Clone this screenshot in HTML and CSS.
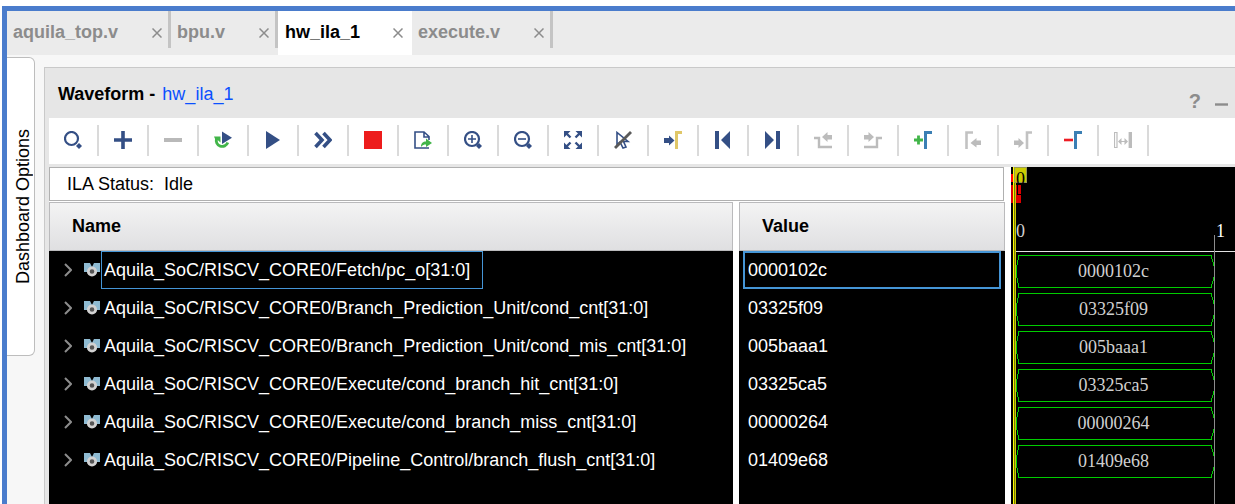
FILE: index.html
```html
<!DOCTYPE html>
<html lang="en">
<head>
<meta charset="utf-8">
<title>hw_ila_1</title>
<link rel="stylesheet" href="styles.css">
</head>
<body>
<div class="window">
  <nav class="tabs" aria-label="Editors">
    <div class="tab tab-first"><button class="tab-name">aquila_top.v</button><button class="tab-close" aria-label="Close aquila_top.v"><svg viewBox="0 0 10 10"><path d="M.5.5l9 9M9.500.5l-9 9"/></svg></button></div>
    <div class="tab tab-short"><button class="tab-name">bpu.v</button><button class="tab-close" aria-label="Close bpu.v"><svg viewBox="0 0 10 10"><path d="M.5.5l9 9M9.500.5l-9 9"/></svg></button></div>
    <div class="tab tab-active"><button class="tab-name">hw_ila_1</button><button class="tab-close" aria-label="Close hw_ila_1"><svg viewBox="0 0 10 10"><path d="M.5.5l9 9M9.500.5l-9 9"/></svg></button></div>
    <div class="tab tab-last"><button class="tab-name">execute.v</button><button class="tab-close" aria-label="Close execute.v"><svg viewBox="0 0 10 10"><path d="M.5.5l9 9M9.500.5l-9 9"/></svg></button></div>
  </nav>
  <div class="workspace">
    <button class="side-tab"><span>Dashboard Options</span></button>
    <section class="panel">
      <header class="panel-head">
        <h1>Waveform - <a href="#">hw_ila_1</a></h1>
        <button class="help" aria-label="Help">?</button>
        <button class="minimize" aria-label="Minimize"><svg viewBox="0 0 13 3"><path d="M0 1.500h13" stroke="#8c8c8c" stroke-width="2.400"/></svg></button>
      </header>
      <div class="toolbar">
        <button aria-label="Search"><svg viewBox="0 0 18 18" fill="none" stroke="#344f85"><circle cx="7.500" cy="7.500" r="6.500" stroke-width="2.200"/><path d="M13.500 13.500l3 3" stroke-width="4.200"/></svg></button>
        <button aria-label="Add"><svg viewBox="0 0 18 18"><path d="M9 0v18M0 9h18" stroke="#344f85" stroke-width="3.600"/></svg></button>
        <button aria-label="Remove"><svg viewBox="0 0 18 18"><path d="M0 9h18" stroke="#b9b9b9" stroke-width="4"/></svg></button>
        <button aria-label="Auto re-trigger"><svg viewBox="0 0 18 18"><path d="M2.600 7.500A5.800 5.800 0 1 0 13.800 11.500" fill="none" stroke="#42b549" stroke-width="2.800"/><path d="M0 5.500H6.500V11.500L4.200 9.500 1.500 9z" fill="#42b549"/><path d="M8 .5L18 6.700 8 13z" fill="#344f85"/></svg></button>
        <button aria-label="Run trigger"><svg viewBox="0 0 18 18"><path d="M2 0L16 9 2 18z" fill="#344f85"/></svg></button>
        <button aria-label="Run trigger immediate"><svg viewBox="0 0 18 18"><path d="M1.500 2L8 9l-6.500 7M9.500 2L16 9l-6.500 7" fill="none" stroke="#344f85" stroke-width="3.600"/></svg></button>
        <button aria-label="Stop trigger"><svg viewBox="0 0 18 18"><path d="M0 0h18v18H0z" fill="#ed1c1c"/></svg></button>
        <button aria-label="Export data"><svg viewBox="0 0 18 18"><path d="M15 9V5.500L10 1H1v16h14M10 1v5h5" fill="none" stroke="#344f85" stroke-width="1.600"/><path d="M7 16c0-4 2-5.500 5-5.500V7.500l6 4.500-6 4v-2.500c-2 0-3.500.5-5 2.500z" fill="#42b549"/></svg></button>
        <button aria-label="Zoom in"><svg viewBox="0 0 18 18" fill="none" stroke="#344f85"><circle cx="8" cy="8" r="7" stroke-width="2.200"/><path d="M8 4v8M4 8h8" stroke-width="1.600"/><path d="M13.500 13.500l3 3" stroke-width="4.200"/></svg></button>
        <button aria-label="Zoom out"><svg viewBox="0 0 18 18" fill="none" stroke="#344f85"><circle cx="8" cy="8" r="7" stroke-width="2.200"/><path d="M4 8h8" stroke-width="1.600"/><path d="M13.500 13.500l3 3" stroke-width="4.200"/></svg></button>
        <button aria-label="Zoom fit"><svg viewBox="0 0 18 18"><path d="M0 0h6.500L0 6.500zM18 0v6.500L11.500 0zM0 18v-6.500L6.500 18zM18 18h-6.500l6.500-6.500z" fill="#344f85"/><path d="M2 2l4.500 4.500M16 2l-4.500 4.500M2 16l4.500-4.500M16 16l-4.500-4.500" stroke="#344f85" stroke-width="2.400"/></svg></button>
        <button aria-label="Go to cursor"><svg viewBox="0 0 18 18" fill="none"><path d="M3 1.500v12l3-2.500 3 6 3-1-2.500-5.500H14z" stroke="#344f85" stroke-width="1.600"/><path d="M1 17L17 1" stroke="#5a5a5a" stroke-width="2.800"/></svg></button>
        <button aria-label="Go to marker"><svg viewBox="0 0 18 18"><path d="M0 7h5V4.500l5.500 5L5 14.500V12H0z" fill="#344f85"/><path d="M12.500 18V1.500H18" fill="none" stroke="#e0c768" stroke-width="3"/></svg></button>
        <button aria-label="First"><svg viewBox="0 0 18 18"><path d="M1 0h4v18H1zM16 0v18L7 9z" fill="#344f85"/></svg></button>
        <button aria-label="Last"><svg viewBox="0 0 18 18"><path d="M12 0h4v18h-4zM1 0v18l9-9z" fill="#344f85"/></svg></button>
        <button aria-label="Previous transition"><svg viewBox="0 0 18 18"><path d="M0 7h5v9h13" fill="none" stroke="#bcbcbc" stroke-width="2.400"/><path d="M18 4h-4.500V1L8 6l5.500 5V8.500H18z" fill="#bcbcbc"/></svg></button>
        <button aria-label="Next transition"><svg viewBox="0 0 18 18"><path d="M0 16h13V7h5" fill="none" stroke="#bcbcbc" stroke-width="2.400"/><path d="M0 4h4.500V1L10 6l-5.500 5V8.500H0z" fill="#bcbcbc"/></svg></button>
        <button aria-label="Add marker"><svg viewBox="0 0 18 18" fill="none"><path d="M4.500 4.500v9M0 9h9" stroke="#42b549" stroke-width="2.800"/><path d="M11.500 18V1.500H18" stroke="#3b7fb4" stroke-width="3"/></svg></button>
        <button aria-label="Previous marker"><svg viewBox="0 0 18 18"><path d="M2.500 18V1.500H9" fill="none" stroke="#c2c2c2" stroke-width="2.600"/><path d="M17 9.500h-4.500V7L6.500 12l6 4.500V14H17z" fill="#bcbcbc"/></svg></button>
        <button aria-label="Next marker"><svg viewBox="0 0 18 18"><path d="M13 18V1.500h5" fill="none" stroke="#c2c2c2" stroke-width="2.600"/><path d="M0 9.500h4.500V7l5.500 5-5.500 5v-3H0z" fill="#bcbcbc"/></svg></button>
        <button aria-label="Delete marker"><svg viewBox="0 0 18 18" fill="none"><path d="M0 9h9" stroke="#ed1c24" stroke-width="2.600"/><path d="M11.500 18V1.500H18" stroke="#3b7fb4" stroke-width="3"/></svg></button>
        <button aria-label="Swap cursors"><svg viewBox="0 0 18 18" fill="none" stroke="#bcbcbc"><path d="M.5 1.500H3v15H.5zM6 10.500h6" stroke-width="1.200"/><path d="M16.300 1v16" stroke-width="3.400"/><path d="M7.500 7v7L4 10.500zM10.500 7v7l3.500-3.500z" fill="#bcbcbc" stroke="none"/></svg></button>
      </div>
      <div class="content">
        <div class="signals">
          <p class="status">ILA Status:&nbsp; Idle</p>
          <table>
            <thead><tr><th class="name">Name</th><th class="value">Value</th></tr></thead>
            <tbody>
              <tr class="selected"><td class="name"><div class="signal"><button class="expand" aria-label="Expand"><svg viewBox="0 0 8 14"><path d="M1 1l6 6-6 6"/></svg></button><svg class="bus" viewBox="0 0 16 14"><path d="M0 0h6l2 4 2-4h6v9H0z" fill="#8fbbd2"/><circle cx="8" cy="8.500" r="3.700" fill="#555" stroke="#d2d2d2" stroke-width="2.800"/></svg><span class="label">Aquila_SoC/RISCV_CORE0/Fetch/pc_o[31:0]</span></div></td><td class="value"><div>0000102c</div></td></tr>
              <tr><td class="name"><div class="signal"><button class="expand" aria-label="Expand"><svg viewBox="0 0 8 14"><path d="M1 1l6 6-6 6"/></svg></button><svg class="bus" viewBox="0 0 16 14"><path d="M0 0h6l2 4 2-4h6v9H0z" fill="#8fbbd2"/><circle cx="8" cy="8.500" r="3.700" fill="#555" stroke="#d2d2d2" stroke-width="2.800"/></svg><span class="label">Aquila_SoC/RISCV_CORE0/Branch_Prediction_Unit/cond_cnt[31:0]</span></div></td><td class="value"><div>03325f09</div></td></tr>
              <tr><td class="name"><div class="signal"><button class="expand" aria-label="Expand"><svg viewBox="0 0 8 14"><path d="M1 1l6 6-6 6"/></svg></button><svg class="bus" viewBox="0 0 16 14"><path d="M0 0h6l2 4 2-4h6v9H0z" fill="#8fbbd2"/><circle cx="8" cy="8.500" r="3.700" fill="#555" stroke="#d2d2d2" stroke-width="2.800"/></svg><span class="label">Aquila_SoC/RISCV_CORE0/Branch_Prediction_Unit/cond_mis_cnt[31:0]</span></div></td><td class="value"><div>005baaa1</div></td></tr>
              <tr><td class="name"><div class="signal"><button class="expand" aria-label="Expand"><svg viewBox="0 0 8 14"><path d="M1 1l6 6-6 6"/></svg></button><svg class="bus" viewBox="0 0 16 14"><path d="M0 0h6l2 4 2-4h6v9H0z" fill="#8fbbd2"/><circle cx="8" cy="8.500" r="3.700" fill="#555" stroke="#d2d2d2" stroke-width="2.800"/></svg><span class="label">Aquila_SoC/RISCV_CORE0/Execute/cond_branch_hit_cnt[31:0]</span></div></td><td class="value"><div>03325ca5</div></td></tr>
              <tr><td class="name"><div class="signal"><button class="expand" aria-label="Expand"><svg viewBox="0 0 8 14"><path d="M1 1l6 6-6 6"/></svg></button><svg class="bus" viewBox="0 0 16 14"><path d="M0 0h6l2 4 2-4h6v9H0z" fill="#8fbbd2"/><circle cx="8" cy="8.500" r="3.700" fill="#555" stroke="#d2d2d2" stroke-width="2.800"/></svg><span class="label">Aquila_SoC/RISCV_CORE0/Execute/cond_branch_miss_cnt[31:0]</span></div></td><td class="value"><div>00000264</div></td></tr>
              <tr><td class="name"><div class="signal"><button class="expand" aria-label="Expand"><svg viewBox="0 0 8 14"><path d="M1 1l6 6-6 6"/></svg></button><svg class="bus" viewBox="0 0 16 14"><path d="M0 0h6l2 4 2-4h6v9H0z" fill="#8fbbd2"/><circle cx="8" cy="8.500" r="3.700" fill="#555" stroke="#d2d2d2" stroke-width="2.800"/></svg><span class="label">Aquila_SoC/RISCV_CORE0/Pipeline_Control/branch_flush_cnt[31:0]</span></div></td><td class="value"><div>01409e68</div></td></tr>
            </tbody>
          </table>
          <div class="rest"><div></div><div></div></div>
        </div>
        <div class="wave">
          <div class="ruler"><span>0</span><span class="tick">1</span></div>
          <div class="buses">
            <div class="segment"><svg viewBox="0 0 199 33" preserveAspectRatio="none"><path d="M3 .5h192l3.500 12v8l-3.500 12H3L.5 20.500v-8z"/></svg><span>0000102c</span></div>
            <div class="segment"><svg viewBox="0 0 199 33" preserveAspectRatio="none"><path d="M3 .5h192l3.500 12v8l-3.500 12H3L.5 20.500v-8z"/></svg><span>03325f09</span></div>
            <div class="segment"><svg viewBox="0 0 199 33" preserveAspectRatio="none"><path d="M3 .5h192l3.500 12v8l-3.500 12H3L.5 20.500v-8z"/></svg><span>005baaa1</span></div>
            <div class="segment"><svg viewBox="0 0 199 33" preserveAspectRatio="none"><path d="M3 .5h192l3.500 12v8l-3.500 12H3L.5 20.500v-8z"/></svg><span>03325ca5</span></div>
            <div class="segment"><svg viewBox="0 0 199 33" preserveAspectRatio="none"><path d="M3 .5h192l3.500 12v8l-3.500 12H3L.5 20.500v-8z"/></svg><span>00000264</span></div>
            <div class="segment"><svg viewBox="0 0 199 33" preserveAspectRatio="none"><path d="M3 .5h192l3.500 12v8l-3.500 12H3L.5 20.500v-8z"/></svg><span>01409e68</span></div>
          </div>
          <div class="gridline"></div>
          <div class="trigger"></div>
          <div class="cursor"></div>
          <div class="cursor-flag">0</div>
        </div>
      </div>
    </section>
  </div>
</div>
</body>
</html>
```
FILE: styles.css
```css
* { box-sizing: border-box; }
body {
  margin: 0;
  padding: 6px 0 0 2px;
  min-height: 100vh;
  display: flex;
  background: #fff;
  color: #000;
  font: 18px/22px "Liberation Sans", Arial, sans-serif;
  overflow: hidden;
}
button {
  border: 0;
  padding: 0;
  background: none;
  color: inherit;
  font: inherit;
}
svg { display: block; }
.window {
  flex: 1;
  min-width: 0;
  display: flex;
  flex-direction: column;
  border: solid #4a7ccc;
  border-width: 5px 0 0 5px;
  background: #f7f7f7;
}
.tabs { display: flex; height: 44px; background: #ebebeb; }
.tab {
  display: flex;
  align-items: center;
  justify-content: space-between;
  height: 37px;
  padding: 5px 6px 0 6px;
  border-right: 3px solid #c4c4c4;
  color: #8c8c8c;
  font-weight: bold;
}
.tab-first { width: 164px; }
.tab-short { width: 107px; }
.tab-active {
  width: 134px;
  height: 44px;
  padding: 0 9px 2px 7px;
  border-right: 0;
  background: #fff;
  color: #000;
}
.tab-last { width: 141px; }
.tab-close svg { width: 10px; height: 10px; margin-top: 2px; }
.tab-close path { fill: none; stroke: #8c8c8c; stroke-width: 1.5px; }
.workspace { flex: 1; display: flex; align-items: flex-start; min-height: 0; }
.side-tab {
  width: 28px;
  height: 299px;
  margin-top: 2px;
  border: 1px solid #bdbdbd;
  border-left: 0;
  border-radius: 0 6px 6px 0;
  background: #fff;
  display: flex;
  align-items: center;
  justify-content: center;
}
.side-tab span {
  writing-mode: vertical-rl;
  transform: rotate(180deg);
  margin-left: 4px;
  white-space: nowrap;
}
.panel {
  flex: 1;
  min-width: 0;
  align-self: stretch;
  display: flex;
  flex-direction: column;
  margin: 12px 0 0 9px;
  padding-left: 4px;
  border: solid #c9c9c9;
  border-width: 1px 0 0 1px;
  background: #e6e6e6;
}
.panel-head { display: flex; align-items: center; height: 50px; padding: 2px 7px 0 9px; }
.panel-head h1 { flex: 1; margin: 0; font: inherit; font-weight: bold; }
.panel-head a { margin-left: 2px; color: #0a50ff; font-weight: normal; text-decoration: none; }
.help { margin: 14px 14px 0 0; color: #8c8c8c; font-size: 20px; font-weight: bold; }
.minimize { padding-top: 20px; }
.minimize svg { width: 13px; height: 3px; }
.toolbar { display: flex; height: 46px; padding-top: 7px; background: #fff; }
.toolbar button {
  flex: none;
  display: grid;
  place-items: center;
  width: 50px;
  height: 31px;
  padding-bottom: 1px;
  border-right: 2px solid #dadada;
}
.toolbar svg { width: 18px; height: 18px; }
.content {
  flex: 1;
  display: grid;
  grid-template-columns: minmax(0, 1fr) 224px;
  margin-top: 3px;
}
.signals {
  display: flex;
  flex-direction: column;
  padding-right: 6px;
  background: #fff;
}
.status {
  height: 34px;
  margin: 0 1px 1px 0;
  padding: 5px 17px;
  border: 1px solid #b0b0b0;
}
table { width: 100%; border-collapse: separate; border-spacing: 0; table-layout: fixed; }
th, td { padding: 0; text-align: left; background: #000; color: #fff; }
th {
  height: 49px;
  padding: 0 0 2px 23px;
  background: linear-gradient(#f4f4f4, #dfdfe1);
  background-clip: padding-box;
  box-shadow: inset 0 0 0 1px #bababc;
  color: #000;
}
td { height: 38px; }
.value { width: 272px; border-left: 6px solid #fff; }
.signal { display: flex; align-items: center; padding-left: 15px; white-space: nowrap; }
.expand { margin-right: 12px; }
.expand svg { width: 8px; height: 14px; }
.expand path { fill: none; stroke: #8c8c8c; stroke-width: 2px; }
.bus { width: 16px; height: 14px; margin-right: 1px; }
.label, td.value div {
  height: 38px;
  border: 1px solid transparent;
  line-height: 36px;
}
.label { padding: 0 12px 0 2px; }
td.value div { margin: 0 4px; padding-left: 3px; border-width: 2px; line-height: 34px; }
.selected .label, .selected td.value div { border-color: #4595d6; }
.rest { flex: 1; display: grid; grid-template-columns: 1fr 266px; gap: 6px; }
.rest div { background: #000; }
.wave {
  position: relative;
  background: #000;
  color: #d0d0d0;
  font-family: "Liberation Serif", "Times New Roman", serif;
}
.ruler {
  display: grid;
  grid-template-columns: 200px 1fr;
  height: 85px;
  margin-left: 5px;
  padding-top: 53px;
  border-bottom: 1px solid #e2e2e2;
}
.tick { color: #fff; }
.buses { display: grid; gap: 5px; width: 199px; margin: 3px 0 0 5px; }
.segment { display: grid; height: 33px; place-items: center; }
.segment > * { grid-area: 1 / 1; }
.segment svg { width: 100%; height: 33px; }
.segment path { fill: none; stroke: #0c0; stroke-width: 1px; shape-rendering: crispEdges; }
.segment span { margin-right: 4px; padding-bottom: 1px; }
.gridline { position: absolute; left: 203px; top: 68px; bottom: 0; width: 1px; background: #8c8c8c; }
.trigger {
  position: absolute;
  left: 0;
  top: 18px;
  width: 10px;
  height: 18px;
  background: #dc0000;
}
.trigger::before {
  content: "";
  position: absolute;
  left: 0;
  top: -11px;
  width: 2px;
  height: 8px;
  background: #f00;
}
.trigger::after {
  content: "";
  position: absolute;
  left: 6px;
  top: 0;
  width: 3px;
  height: 9px;
  border: solid #000;
  border-width: 0 0 1px 1px;
}
.cursor {
  position: absolute;
  left: 2px;
  top: 0;
  bottom: 0;
  width: 3px;
  border: solid #ff0;
  border-width: 0 1px;
  border-right-color: #cc0;
  background: #77770a;
}
.cursor-flag {
  position: absolute;
  left: 3px;
  top: 0;
  width: 13px;
  height: 16px;
  padding-left: 1px;
  border: 1px solid #999950;
  background: #cc0;
  color: #000;
}
```
